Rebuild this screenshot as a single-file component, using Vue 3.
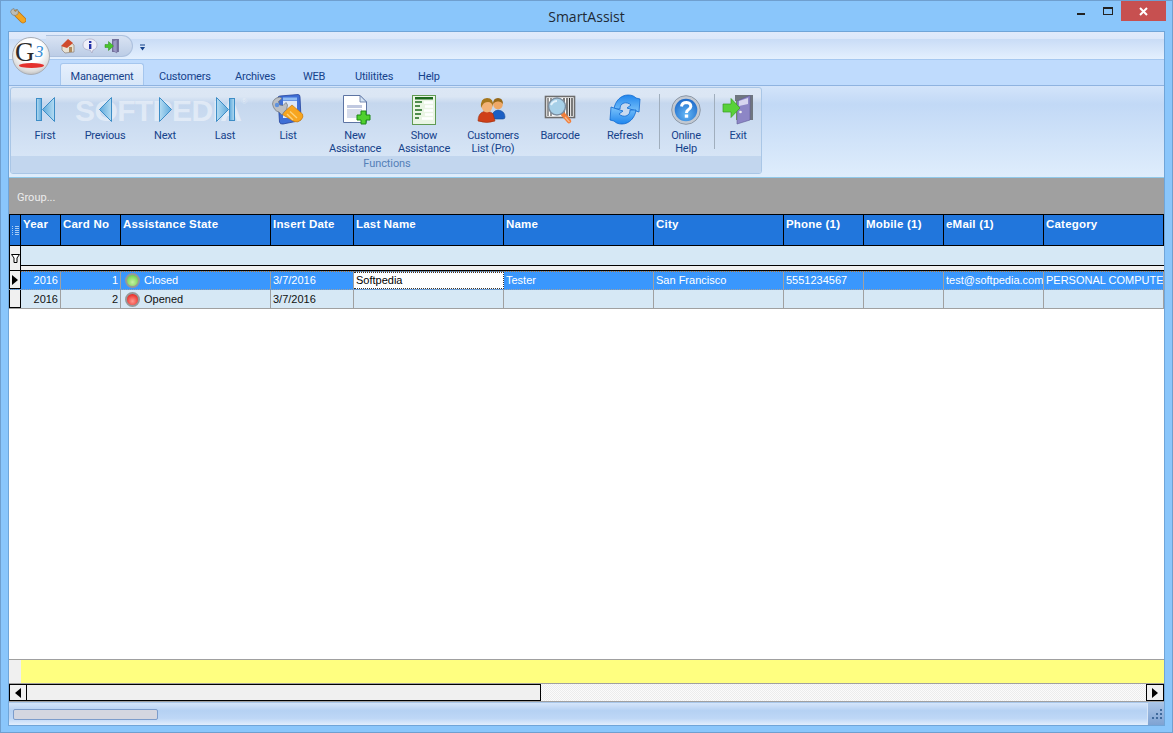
<script setup>
const tabs = ['Customers', 'Archives', 'WEB', 'Utilitites', 'Help']
const columns = ['Year', 'Card No', 'Assistance State', 'Insert Date', 'Last Name', 'Name', 'City', 'Phone (1)', 'Mobile (1)', 'eMail (1)', 'Category']
const rows = [
  { year: '2016', card: '1', state: 'Closed', tone: 'green', date: '3/7/2016', last: 'Softpedia', name: 'Tester', city: 'San Francisco', phone: '5551234567', mobile: '', email: 'test@softpedia.com', category: 'PERSONAL COMPUTE', selected: true },
  { year: '2016', card: '2', state: 'Opened', tone: 'red', date: '3/7/2016', last: '', name: '', city: '', phone: '', mobile: '', email: '', category: '', selected: false }
]
</script>

<template>
  <div class="window">
    <header class="titlebar">
      <svg class="app-icon" width="16" height="16" viewBox="0 0 16 16">
        <path d="M6 5 L13 12" stroke="#b8741a" stroke-width="6.500" stroke-linecap="round"/>
        <path d="M6 5 L13 12" stroke="#f3a51f" stroke-width="5" stroke-linecap="round"/>
        <path d="M.5 4 Q1 1 4 .5 L4.500 3 L6 3.500 L7 1 Q9 3 8 6 Q5.500 8.500 2.500 7 Z" fill="#bdbdb6" stroke="#77776f" stroke-width=".6"/>
      </svg>
      <span class="title">SmartAssist</span>
      <div class="controls">
        <span class="min"></span>
        <span class="max"></span>
        <span class="close">
          <svg width="9" height="9" viewBox="0 0 9 9"><path d="M1 1 L8 8 M8 1 L1 8" stroke="#fff" stroke-width="2"/></svg>
        </span>
      </div>
    </header>

    <div class="client">
      <section class="ribbon">
        <div class="logo">
          <span class="logo-g">G</span>
          <span class="logo-s">3</span>
          <span class="logo-red"></span>
        </div>

        <div class="qat-row">
          <div class="qat">
            <svg width="16" height="16" viewBox="0 0 16 16">
              <path d="M2 8 L8 2 L14 7 L14 14 L5 15 L2 12 Z" fill="#e9e2d3" stroke="#8b7f77" stroke-width=".7"/>
              <path d="M1 8 L8 1 L13 5 L7 10 Z" fill="#cf4a2c"/>
              <rect x="9" y="9" width="3" height="5" fill="#b08a5b"/>
            </svg>
            <svg width="16" height="16" viewBox="0 0 16 16">
              <path d="M8 1 C12 1 15 3.500 15 7 C15 10 13 11.500 11 12 L10 15 L8 12 C4 12 1 10.500 1 7 C1 3.500 4 1 8 1 Z" fill="#eeeef8" stroke="#a6a6c0" stroke-width=".7"/>
              <rect x="7" y="3" width="2.400" height="2" fill="#2330a8"/>
              <rect x="7" y="6" width="2.400" height="5" fill="#2330a8"/>
            </svg>
            <svg width="16" height="16" viewBox="0 0 16 16">
              <path d="M8 1 H15 V14 H8 Z" fill="#76739e"/>
              <path d="M9 3 L13 1.500 V15 L9 13 Z" fill="#9a97c4" stroke="#5e5b86" stroke-width=".4"/>
              <path d="M1 6.500 H4.500 V3.500 L9.500 8 L4.500 12.500 V9.500 H1 Z" fill="#47c52b" stroke="#2d8a1a" stroke-width=".5"/>
            </svg>
          </div>
          <svg class="qat-more" width="7" height="8" viewBox="0 0 7 8"><path d="M1 1 H6" stroke="#15428b" stroke-width="1"/><path d="M1 3 H6 L3.500 6.500 Z" fill="#15428b"/></svg>
        </div>

        <nav class="tabs">
          <span class="tab active">Management</span>
          <span v-for="tab in tabs" :key="tab" class="tab" :class="'tab-' + tab.toLowerCase()">{{ tab }}</span>
        </nav>

        <div class="panel">
          <div class="group">
            <div class="watermark">SOFTPEDIA<sup>®</sup></div>
            <div class="buttons">
              <div class="btn">
                <svg class="ico" viewBox="0 0 32 32">
                  <defs>
                    <linearGradient id="nav" x1="0" y1="0" x2="1" y2="0"><stop offset="0" stop-color="#5ea9dc"/><stop offset="1" stop-color="#b5dcf2"/></linearGradient>
                    <linearGradient id="navr" x1="0" y1="0" x2="1" y2="0"><stop offset="0" stop-color="#b5dcf2"/><stop offset="1" stop-color="#5ea9dc"/></linearGradient>
                  </defs>
                  <rect x="7.500" y="5.500" width="5" height="22" fill="url(#navr)" stroke="#3d8dc6"/>
                  <path d="M13.500 16.500 L25.500 4.500 V28.500 Z" fill="url(#nav)" stroke="#3d8dc6" stroke-linejoin="round"/>
                </svg>
                <span>First</span>
              </div>
              <div class="btn">
                <svg class="ico" viewBox="0 0 32 32">
                  <path d="M10.500 16.500 L22.500 4.500 V28.500 Z" fill="url(#nav)" stroke="#3d8dc6" stroke-linejoin="round"/>
                </svg>
                <span>Previous</span>
              </div>
              <div class="btn">
                <svg class="ico" viewBox="0 0 32 32">
                  <path d="M22.500 16.500 L10.500 4.500 V28.500 Z" fill="url(#navr)" stroke="#3d8dc6" stroke-linejoin="round"/>
                </svg>
                <span>Next</span>
              </div>
              <div class="btn">
                <svg class="ico" viewBox="0 0 32 32">
                  <path d="M19.500 16.500 L7.500 4.500 V28.500 Z" fill="url(#navr)" stroke="#3d8dc6" stroke-linejoin="round"/>
                  <rect x="20.500" y="5.500" width="5" height="22" fill="url(#nav)" stroke="#3d8dc6"/>
                </svg>
                <span>Last</span>
              </div>
              <div class="btn">
                <svg class="ico" viewBox="0 0 32 32">
                  <path d="M6 5 Q6 3 8 3 L26 1.500 Q28 1.500 28 4 L29 25 Q29 28 26 28 L11 31 Q8 31.500 7.500 29 Z" fill="#3f6fd6" stroke="#23429c" stroke-width=".8"/>
                  <rect x="11" y="8" width="14" height="17" fill="#dce8f8"/>
                  <path d="M11 4.500 H25 V7.500 H11 Z" fill="#8fbcf2"/>
                  <path d="M9.500 21 L20 12 L30.500 21 Q32 24 29 27 Q26 30 22 28.500 Z" fill="#f7a51f" stroke="#c67a12" stroke-width=".7"/>
                  <path d="M15 21 L21 27 M18 18.500 L25 25" stroke="#fcd27a" stroke-width="1.400"/>
                  <path d="M.5 11 Q1 5 8 4 L10 5.500 L6.500 8.500 L7.500 12 L11 12.500 L14 9.500 L15.500 12 Q15.500 17 12 19 L10 22 L7 19 Q2 18 .5 11 Z" fill="#bcbfc3" stroke="#707478" stroke-width=".7"/>
                  <circle cx="5" cy="12" r="2.200" fill="#5f92dd"/>
                </svg>
                <span>List</span>
              </div>
              <div class="btn">
                <svg class="ico" viewBox="0 0 32 32">
                  <path d="M4.500 2.500 H21 L27.500 9 V29.500 H4.500 Z" fill="#fff" stroke="#5d74a3"/>
                  <path d="M21 2.500 V9 H27.500 Z" fill="#d5e4f4" stroke="#5d74a3" stroke-width=".8"/>
                  <rect x="8" y="12" width="15" height="3" fill="#c0c8e0"/>
                  <rect x="8" y="16" width="15" height="9" fill="#d6dcec"/>
                  <path d="M22 18 H27 V22 H31 V27 H27 V31 H22 V27 H18 V22 H22 Z" fill="#4fd02f" stroke="#1f8a16"/>
                </svg>
                <span>New<br>Assistance</span>
              </div>
              <div class="btn">
                <svg class="ico" viewBox="0 0 32 32">
                  <rect x="4.500" y="2.500" width="23" height="29" fill="#eaf5e4" stroke="#5f9a52"/>
                  <rect x="7" y="4" width="18" height="2.500" fill="#1c6a1c"/>
                  <path d="M7 9 H14 M7 13 H12 M7 17 H14 M7 21 H13 M7 25 H11" stroke="#1c6a1c" stroke-width="1.400"/>
                  <path d="M16 9.500 H25 M17 13.500 H25 M16 17.500 H25 M17 21.500 H25 M14 25.500 H25" stroke="#fff" stroke-width="2.400"/>
                </svg>
                <span>Show<br>Assistance</span>
              </div>
              <div class="btn">
                <svg class="ico" viewBox="0 0 32 32">
                  <g transform="translate(-2 1)">
                    <path d="M17 23 Q17 17 23 16 Q30 17 30 23 Q30 25 28 25 H18 Z" fill="#1b5fc4" stroke="#154a94" stroke-width=".6"/>
                    <circle cx="23" cy="10.500" r="4.800" fill="#eea866"/>
                    <path d="M18 10 Q18 4 23 4 Q28 4 28 10 Q26 7 23 7.500 Q20 7 18 10 Z" fill="#96681a"/>
                    <path d="M3 27 Q3 19 9 17.500 Q16 17 18 20 L20 27 Q12 30 3 27 Z" fill="#cf3f18" stroke="#9e3311" stroke-width=".6"/>
                    <ellipse cx="12" cy="12" rx="5.500" ry="6.500" fill="#f2b277"/>
                    <path d="M6 14 Q5 4 12 4 Q19 4 18 13 Q17 8 13 8 Q9 8 7.500 11 Z" fill="#a5761c"/>
                  </g>
                </svg>
                <span>Customers<br>List (Pro)</span>
              </div>
              <div class="btn">
                <svg class="ico" viewBox="0 0 32 32">
                  <rect x="1.500" y="3.500" width="29" height="21" fill="#fff" stroke="#6d6d6d" stroke-width="1.600"/>
                  <path d="M20 5 V23 M23 5 V23 M25.500 5 V23 M28 5 V23" stroke="#333" stroke-width="1.300"/>
                  <path d="M4 5 V23 M7 5 V23" stroke="#555" stroke-width="1.200"/>
                  <path d="M18 20 L25 28" stroke="#f17f3b" stroke-width="4.500" stroke-linecap="round"/>
                  <path d="M21 24 L25.500 29" stroke="#f6b98e" stroke-width="1.200"/>
                  <circle cx="13" cy="13.500" r="8.500" fill="#a7d0e8" stroke="#7c8ea0" stroke-width="1.500"/>
                  <path d="M7 12 Q9 8 13 8" stroke="#e3f2fb" stroke-width="2" fill="none"/>
                </svg>
                <span>Barcode</span>
              </div>
              <div class="btn">
                <svg class="ico" viewBox="0 0 32 32">
                  <defs>
                    <linearGradient id="refresh" x1="0" y1="0" x2="0" y2="1"><stop offset="0" stop-color="#1f86ee"/><stop offset="1" stop-color="#7cc3fa"/></linearGradient>
                  </defs>
                  <path d="M5 16 C6 8 12 2 19 2 C23 2 25 3 27 5 L31 6 L30 19 L18 15 L22 12 C20 10 17 9.500 15 10 C12 11 11 13 11 16 Z" fill="url(#refresh)" stroke="#0f68cf" stroke-width=".8" stroke-linejoin="round"/>
                  <path d="M5 16 C6 8 12 2 19 2 C23 2 25 3 27 5 L31 6 L30 19 L18 15 L22 12 C20 10 17 9.500 15 10 C12 11 11 13 11 16 Z" fill="url(#refresh)" stroke="#0f68cf" stroke-width=".8" stroke-linejoin="round" transform="rotate(180 16 16.500)"/>
                </svg>
                <span>Refresh</span>
              </div>
              <i class="sep sep-a"></i>
              <div class="btn">
                <svg class="ico" viewBox="0 0 32 32">
                  <defs>
                    <radialGradient id="help" cx=".5" cy=".7" r=".7"><stop offset="0" stop-color="#63b7f6"/><stop offset="1" stop-color="#1d69c9"/></radialGradient>
                  </defs>
                  <circle cx="16" cy="17" r="14.300" fill="#c3c9d2" stroke="#8d99a8"/>
                  <circle cx="16" cy="17" r="11.300" fill="url(#help)"/>
                  <path d="M11.500 13.500 Q12 9.500 16.500 9.500 Q21 10 20.800 13.500 Q20.500 15.500 18 17 Q16.500 18 16.500 20" fill="none" stroke="#fff" stroke-width="3"/>
                  <rect x="14.800" y="21.500" width="3.400" height="3.200" fill="#fff"/>
                </svg>
                <span>Online<br>Help</span>
              </div>
              <i class="sep sep-b"></i>
              <div class="btn">
                <svg class="ico" viewBox="0 0 32 32">
                  <path d="M13 2 H31 V27 H25 V8 H13 Z" fill="#6f7680"/>
                  <rect x="14" y="8" width="11" height="19" fill="#6fa34a"/>
                  <path d="M15 8 L28 2.500 V27 L15 31 Z" fill="#8d86c6" stroke="#5f5a96" stroke-width=".6"/>
                  <path d="M17 8 L26 5 L26 11 L17 13 Z" fill="#d7d5ef"/>
                  <circle cx="18.500" cy="19" r="1.300" fill="#eee"/>
                  <path d="M1 11 H9 V5.500 L18 15 L9 24.500 V19 H1 Z" fill="#58d13a" stroke="#3b9c22" stroke-width=".7"/>
                </svg>
                <span>Exit</span>
              </div>
            </div>
            <div class="caption">Functions</div>
          </div>
        </div>
      </section>

      <div class="group-band">Group...</div>

      <section class="grid">
        <div class="row head">
          <div class="ind">
            <svg width="7" height="11" viewBox="0 0 7 11"><path d="M0 1.500 H1 M3 1.500 H7 M0 3.500 H1 M3 3.500 H7 M0 5.500 H1 M3 5.500 H7 M0 7.500 H1 M3 7.500 H7 M0 9.500 H1 M3 9.500 H7" stroke="#a9cdf5"/></svg>
          </div>
          <div v-for="col in columns" :key="col" class="th">{{ col }}</div>
        </div>

        <div class="filter">
          <div class="filter-ind">
            <svg width="9" height="9" viewBox="0 0 9 9"><path d="M.5.500 H8.500 L6 4 V8.500 H3 V4 Z" fill="#fff" stroke="#000"/></svg>
          </div>
          <div class="filter-main">
            <div class="filter-input"></div>
            <div class="filter-gap"></div>
          </div>
        </div>

        <div v-for="row in rows" :key="row.card" class="row data" :class="{ selected: row.selected }">
          <div class="rec">
            <svg v-if="row.selected" width="6" height="10" viewBox="0 0 6 10"><path d="M0 0 L6 5 L0 10 Z" fill="#000"/></svg>
          </div>
          <div class="td right">{{ row.year }}</div>
          <div class="td right">{{ row.card }}</div>
          <div class="td state">
            <span class="led" :class="row.tone"></span>
            <span>{{ row.state }}</span>
          </div>
          <div class="td">{{ row.date }}</div>
          <div class="td" :class="{ editing: row.selected }">{{ row.last }}</div>
          <div class="td">{{ row.name }}</div>
          <div class="td">{{ row.city }}</div>
          <div class="td">{{ row.phone }}</div>
          <div class="td">{{ row.mobile }}</div>
          <div class="td">{{ row.email }}</div>
          <div class="td">{{ row.category }}</div>
        </div>

        <div class="grid-empty"></div>

        <div class="footer">
          <div class="footer-ind"></div>
          <div class="footer-main"></div>
        </div>

        <div class="scroll">
          <div class="sbtn"><svg width="6" height="10" viewBox="0 0 6 10"><path d="M6 0 L0 5 L6 10 Z" fill="#000"/></svg></div>
          <div class="thumb"></div>
          <div class="track"></div>
          <div class="sbtn"><svg width="6" height="10" viewBox="0 0 6 10"><path d="M0 0 L6 5 L0 10 Z" fill="#000"/></svg></div>
        </div>
      </section>

      <footer class="status">
        <div class="progress"></div>
        <div class="grip">
          <svg width="15" height="13" viewBox="0 0 15 13"><path d="M11 1 h2 v2 h-2z M7 5 h2 v2 h-2z M11 5 h2 v2 h-2z M3 9 h2 v2 h-2z M7 9 h2 v2 h-2z M11 9 h2 v2 h-2z" fill="#3f6a9c"/></svg>
        </div>
      </footer>
    </div>
  </div>
</template>

<style scoped>
* { box-sizing: border-box; }

.window {
  width: 1173px;
  height: 733px;
  display: flex;
  flex-direction: column;
  background: #8ac6fb;
  border: 1px solid #6f9fcf;
  font-family: "Liberation Sans", Arial, sans-serif;
  overflow: hidden;
}

/* title bar */
.titlebar {
  height: 30px;
  flex: none;
  display: flex;
  align-items: center;
  justify-content: center;
  position: relative;
}
.app-icon { position: absolute; left: 9px; top: 7px; }
.title {
  font: 14px "Open Sans", sans-serif;
  color: #1f2a36;
  margin-top: 1px;
}
.controls {
  position: absolute;
  right: 6px;
  top: 0;
  height: 20px;
  display: flex;
  align-items: flex-start;
}
.min { width: 8px; height: 2px; background: #222; margin: 12px 18px 0 0; }
.max { width: 10px; height: 8px; border: 1px solid #222; border-top-width: 2px; margin: 6px 8px 0 0; }
.close {
  width: 45px;
  height: 20px;
  background: #c75050;
  display: flex;
  align-items: center;
  justify-content: center;
}

/* client area */
.client {
  flex: 1;
  min-height: 0;
  margin: 0 7px 6px;
  border: 1px solid #70a5d8;
  display: flex;
  flex-direction: column;
  background: #fff;
}

/* ribbon */
.ribbon {
  flex: none;
  height: 146px;
  position: relative;
  display: flex;
  flex-direction: column;
  background: #bfdbfd;
}
.logo {
  position: absolute;
  left: 3px;
  top: 5px;
  width: 38px;
  height: 38px;
  border-radius: 50%;
  background: radial-gradient(circle at 50% 35%, #fff 40%, #dcdcdc 70%, #8f8f8f 100%);
  border: 1px solid #a8adb5;
  overflow: hidden;
  z-index: 2;
}
.logo-g {
  position: absolute;
  left: 2px;
  top: 0;
  font: 27px/28px "Liberation Serif", serif;
  color: #2c2c2c;
}
.logo-s {
  position: absolute;
  left: 22px;
  top: 5px;
  font: italic 17px/18px "Liberation Serif", serif;
  color: #3b8fd6;
}
.logo-red {
  position: absolute;
  left: 6px;
  top: 25px;
  width: 25px;
  height: 5px;
  border-radius: 50%;
  background: #e4312e;
}
.qat-row {
  flex: none;
  height: 28px;
  display: flex;
  align-items: flex-start;
  background: linear-gradient(#e0eafb 0, #dce8fa 24%, #c9dcf6 26%, #e4f0fe 100%);
  border-bottom: 1px solid #a6c8f0;
  padding: 3px 0 0 37px;
}
.qat {
  width: 87px;
  height: 22px;
  border-radius: 0 11px 11px 0;
  background: linear-gradient(#d9e3f3, #bccde6);
  border: 1px solid #adc1de;
  border-left: 0;
  display: flex;
  align-items: center;
  gap: 6px;
  padding: 0 0 0 14px;
}
.qat-more { margin: 9px 0 0 6px; }

.tabs {
  flex: none;
  height: 25px;
  position: relative;
  font: 11px "Roboto", sans-serif;
  letter-spacing: -.2px;
  color: #15428b;
}
.tab {
  height: 22px;
  line-height: 27px;
  position: absolute;
  top: 3px;
  white-space: nowrap;
}
.tab.active {
  left: 51px;
  width: 84px;
  line-height: 25px;
  text-align: center;
  background: linear-gradient(#e6f0fd, #d7e6f8);
  border: 1px solid #a5c6ee;
  border-bottom: 0;
  border-radius: 3px 3px 0 0;
  z-index: 1;
}
.tab-customers { left: 150px; }
.tab-archives { left: 226px; }
.tab-web { left: 294px; }
.tab-utilitites { left: 346px; }
.tab-help { left: 409px; }

.panel {
  flex: 1;
  min-height: 0;
  background: linear-gradient(#d3e4fa, #c2d9f6 20%, #dfedfc);
  border-top: 1px solid #8fb3e0;
  border-bottom: 1px solid #90c8e8;
  padding: 1px 0 0 1px;
}
.group {
  width: 752px;
  height: 87px;
  position: relative;
  display: flex;
  flex-direction: column;
  border: 1px solid #a9c6e6;
  border-radius: 3px;
  overflow: hidden;
  background: linear-gradient(#dce7f5 0, #dbe6f4 10%, #c5d7ee 18%, #dce9f8 100%);
}
.buttons {
  flex: 1;
  position: relative;
  display: grid;
  grid-template-columns: 60px 60px 60px 60px 66px 68px 70px 68px 66px 64px 4px 50px 5px 44px;
  padding-left: 4px;
  font: 11px/13px "Roboto", sans-serif;
  letter-spacing: -.2px;
  color: #15428b;
}
.btn {
  display: flex;
  flex-direction: column;
  align-items: center;
  text-align: center;
  padding-top: 5px;
  white-space: nowrap;
}
.ico {
  width: 32px;
  height: 32px;
  flex: none;
  margin-bottom: 4px;
}
.sep {
  width: 1px;
  height: 55px;
  margin-top: 6px;
  background: #a0aebd;
}
.sep-a { margin-left: 2px; }
.sep-b { margin-left: 3px; }
.caption {
  flex: none;
  height: 17px;
  padding-left: 2px;
  font: 11px/16px "Roboto", sans-serif;
  letter-spacing: -.1px;
  text-align: center;
  color: #5480b8;
  background: #c2d6ee;
}
.watermark {
  position: absolute;
  left: 64px;
  top: 8px;
  font: bold 30px/30px "Liberation Sans", sans-serif;
  color: rgba(255, 255, 255, .45);
  letter-spacing: -.6px;
  white-space: nowrap;
  pointer-events: none;
}
.watermark sup {
  font-size: 8px;
  font-weight: normal;
  vertical-align: 17px;
  line-height: 0;
}

/* band */
.group-band {
  flex: none;
  height: 36px;
  background: #a0a0a0;
  color: #ececec;
  font: 11px/39px "Roboto", sans-serif;
  padding-left: 8px;
}

/* grid */
.grid {
  flex: 1;
  min-height: 0;
  display: flex;
  flex-direction: column;
  background: #fff;
}
.row {
  flex: none;
  display: grid;
  grid-template-columns: 12px 40px 60px 150px 83px 150px 150px 130px 80px 80px 100px 120px;
  width: 1155px;
}
.head {
  height: 32px;
  background: #2176dc;
  border: 1px solid #000;
  grid-template-columns: 10px 40px 60px 150px 83px 150px 150px 130px 80px 80px 100px 120px;
}
.ind {
  display: flex;
  align-items: center;
  justify-content: center;
}
.th {
  border-left: 1px solid #000;
  padding: 2px 0 0 2px;
  color: #fff;
  font: bold 11.500px/15px "Liberation Sans", sans-serif;
  letter-spacing: .2px;
  white-space: nowrap;
  overflow: hidden;
}
.filter {
  flex: none;
  height: 25px;
  display: flex;
}
.filter-ind {
  width: 12px;
  background: #f0f0f0;
  border: 1px solid #000;
  border-top: 0;
  display: flex;
  align-items: center;
  justify-content: center;
}
.filter-main {
  width: 1143px;
  display: flex;
  flex-direction: column;
}
.filter-input { height: 19px; background: #d6e8f5; }
.filter-gap {
  flex: 1;
  background: #f0f0f0;
  border-top: 1px solid #000;
  border-bottom: 1px solid #000;
}
.data {
  font-size: 11px;
  line-height: 18px;
  height: 19px;
  color: #111;
  background: #d6e8f5;
  border-bottom: 1px solid #a0a0a0;
}
.data.selected {
  color: #fff;
  line-height: 17px;
  background: #3a97fd;
  border-top: 1px dotted #b3702a;
  border-bottom: 1px dotted #a0a0a0;
}
.rec {
  background: #f0f0f0;
  border: 1px solid #000;
  border-top: 0;
  display: flex;
  align-items: center;
  justify-content: center;
}
.selected .rec { margin-top: -1px; }
.td {
  border-right: 1px solid #a0a0a0;
  padding: 0 2px;
  white-space: nowrap;
  overflow: hidden;
}
.right { text-align: right; }
.state {
  display: flex;
  align-items: center;
  gap: 4px;
  padding-left: 4px;
}
.led {
  width: 15px;
  height: 15px;
  flex: none;
  border-radius: 50%;
  border: 2px solid #97999a;
}
.led.green { background: radial-gradient(circle at 50% 65%, #c6f3a6, #68cf45 85%); }
.led.red { background: radial-gradient(circle at 50% 65%, #ff9a90, #e8201c 85%); }
.editing {
  background: #fff;
  color: #000;
  border: 1px dotted #333;
  border-left: 0;
  line-height: 15px;
}
.grid-empty { flex: 1; min-height: 0; }
.footer {
  flex: none;
  height: 25px;
  display: flex;
  border-top: 1px solid #a0a0a0;
  border-bottom: 1px solid #a0a0a0;
}
.footer-ind { width: 12px; background: #f0f0f0; }
.footer-main { flex: 1; background: #ffff80; }
.scroll {
  flex: none;
  height: 18px;
  display: flex;
  border-bottom: 1px solid #a0a0a0;
}
.sbtn {
  width: 18px;
  flex: none;
  background: #f0f0f0;
  border: 1px solid #000;
  display: flex;
  align-items: center;
  justify-content: center;
}
.thumb {
  width: 514px;
  flex: none;
  background: #f0f0f0;
  border: solid #000;
  border-width: 1px 1px 1px 0;
}
.track {
  flex: 1;
  background: repeating-conic-gradient(#ececec 0 25%, #fbfbfb 0 50%) 0 0 / 2px 2px;
}

/* status bar */
.status {
  flex: none;
  height: 23px;
  display: flex;
  justify-content: space-between;
  background: linear-gradient(#d5e5fa, #b5d1f3 35%, #bed7f6 70%, #e2eefd);
  border-top: 1px solid #a9c7ea;
  padding-left: 4px;
}
.progress {
  width: 145px;
  height: 11px;
  margin-top: 6px;
  background: #d4d6e0;
  border: 1px solid #7c9ccb;
  border-radius: 2px;
}
.grip {
  width: 17px;
  background: linear-gradient(#a9c4e6, #7fa3d3);
  border-left: 1px solid #d8e6f7;
  display: flex;
  align-items: flex-end;
  justify-content: center;
  padding-bottom: 4px;
}
</style>

<style>
html, body { margin: 0; background: #8ac6fb; }
</style>
